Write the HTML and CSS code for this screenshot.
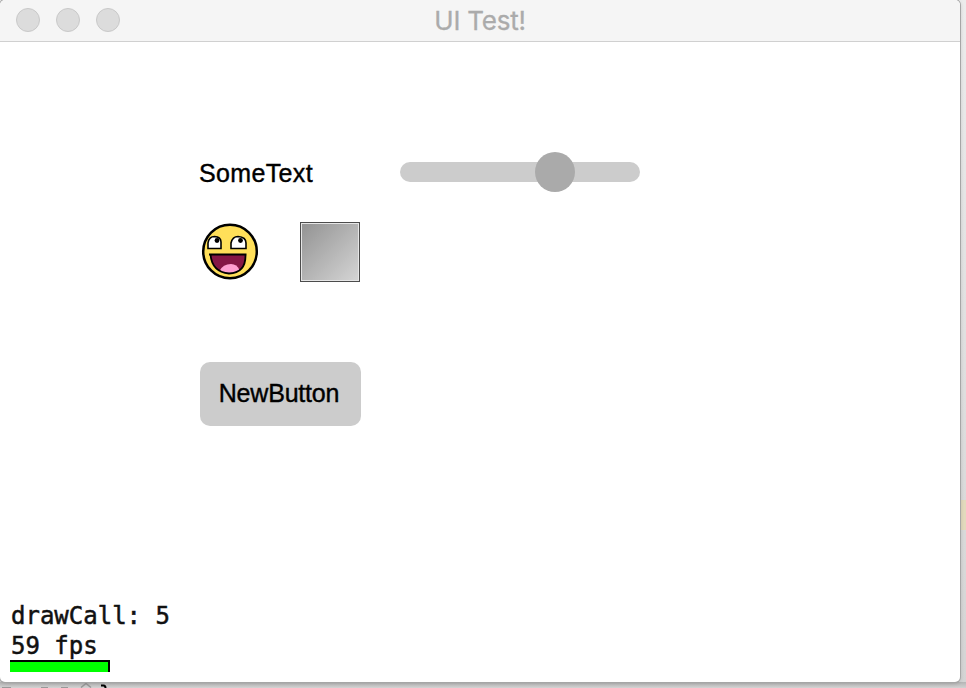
FILE: index.html
```
<!DOCTYPE html>
<html lang="en">
<head>
<meta charset="utf-8">
<title>UI Test!</title>
<link rel="stylesheet" href="styles.css">
</head>
<body>
<div class="desktop">
  <main class="window">
    <header class="titlebar">
      <div class="controls"><i></i><i></i><i></i></div>
      <h1>UI Test!</h1>
    </header>
    <section class="scene">
      <div class="row row-text">
        <span class="label">SomeText</span>
        <div class="slider"><div class="thumb"></div></div>
      </div>
      <div class="row row-images">
        <svg class="face" width="60" height="60" viewBox="0 0 60 60">
          <circle cx="30" cy="29.5" r="26.8" fill="#ffdf59" stroke="#000" stroke-width="2.5"/>
          <path d="M8 26.500V21Q9 14.500 14.500 14.500Q21 15 21 20V26.500Z" fill="#fff" stroke="#000" stroke-width="1.600"/>
          <path d="M31 26.500V21Q32.500 14.500 38 14.500Q46 15 46 21V26.500Z" fill="#fff" stroke="#000" stroke-width="1.600"/>
          <circle cx="17" cy="18.500" r="2.400"/>
          <circle cx="40.500" cy="18.500" r="2.400"/>
          <path d="M10.500 32.500H45.500Q46 51 29 51.500Q12 50 10.500 32.500Z" fill="#851745"/>
          <path d="M19.500 49Q23 42 31 42Q37 42 39.500 48Q30 54 19.500 49Z" fill="#ff9fd0"/>
          <path d="M9 32.500H46.500M10.500 32.500Q12 50 29 51.500Q46 51 45.500 32.500" fill="none" stroke="#000" stroke-width="1.800"/>
        </svg>
        <div class="swatch"></div>
      </div>
      <button class="button">NewButton</button>
      <footer class="stats">
        <div>drawCall: 5</div>
        <div>59 fps</div>
        <div class="meter"></div>
      </footer>
    </section>
  </main>
  <div class="highlight"></div>
  <svg class="behind" width="966" height="6" viewBox="0 0 966 6">
    <path d="M2 5.500H11M41 5.500H48M61 5.500H68" stroke="#999" fill="none"/>
    <path d="M81 5.500L86 1.500L91 5.500" stroke="#999" stroke-width="1.500" fill="none"/>
    <path d="M101 3.500H103.500Q105.500 3.500 105.500 6" stroke="#000" stroke-width="2" fill="none"/>
  </svg>
</div>
</body>
</html>
```
FILE: styles.css
```
* { box-sizing: border-box; }
body { margin: 0; overflow: hidden; font-family: "Liberation Sans", Arial, sans-serif; }
.desktop {
  position: relative;
  width: 966px;
  height: 688px;
  overflow: hidden;
  background: linear-gradient(#ececec, #dcdcdc 65%, #d4d4d4);
}
.window {
  position: relative;
  z-index: 1;
  width: 960px;
  height: 682px;
  display: flex;
  flex-direction: column;
  background: #fff;
  border-radius: 5px;
  overflow: hidden;
  box-shadow: 0 0 0 1px #a6a6a6, 0 1px 4px rgba(0, 0, 0, .2);
}
.titlebar {
  flex: none;
  height: 42px;
  display: grid;
  grid-template-columns: 1fr auto 1fr;
  align-items: center;
  background: #f5f5f5;
  border-bottom: 1px solid #d0d0d0;
}
.controls { display: flex; gap: 16px; padding-left: 16px; margin-top: -1px; }
.controls i { width: 24px; height: 24px; border-radius: 50%; background: #dcdcdc; border: 1px solid #c9c9c9; }
.titlebar h1 { margin: 0; font: 400 26px/40px Inter, sans-serif; letter-spacing: -.25px; color: #ababab; -webkit-text-stroke: .3px #ababab; }
.scene { flex: 1; display: flex; flex-direction: column; padding: 110px 0 10px; }
.row { display: flex; margin-left: 200px; }
.row-text { height: 40px; align-items: center; }
.label { width: 200px; margin-top: 1px; margin-left: -1px; margin-right: 1px; font-size: 25px; line-height: 30px; letter-spacing: .36px; color: #000; -webkit-text-stroke: .4px #000; }
.slider { width: 240px; height: 20px; border-radius: 10px; background: #ccc; }
.thumb { width: 40px; height: 40px; margin: -10px 0 0 135px; border-radius: 50%; background: #aaa; }
.row-images { height: 60px; margin-top: 30px; gap: 40px; }
.face { display: block; }
.swatch {
  width: 60px;
  height: 60px;
  border: 1px solid #4c4c4c;
  background: linear-gradient(135deg, #929292, #d5d5d5);
  box-shadow: inset 0 0 0 1px #e6e6e6;
}
.button {
  width: 161px;
  height: 64px;
  margin: 80px 0 0 200px;
  padding: 0 3px 2px 0;
  border: 0;
  border-radius: 10px;
  background: #ccc;
  font: 25px/62px "Liberation Sans", Arial, sans-serif;
  letter-spacing: -.2px;
  color: #000;
  -webkit-text-stroke: .4px #000;
}
.stats { margin: auto 0 0 10px; font: 24px/30px "DejaVu Sans Mono", monospace; color: #111; -webkit-text-stroke: .5px #111; }
.stats div { padding-left: 1px; }
.stats .meter { width: 100px; height: 12px; padding: 0; margin-top: -1px; background: #0f0; border: solid #000; border-width: 2px 2px 0 0; }
.highlight { position: absolute; left: 961px; top: 500px; width: 5px; height: 30px; background: #e2dabd; }
.behind {
  position: absolute;
  left: 0;
  top: 682px;
  background: linear-gradient(#b5b5b5, #d2d2d2);
}
```
